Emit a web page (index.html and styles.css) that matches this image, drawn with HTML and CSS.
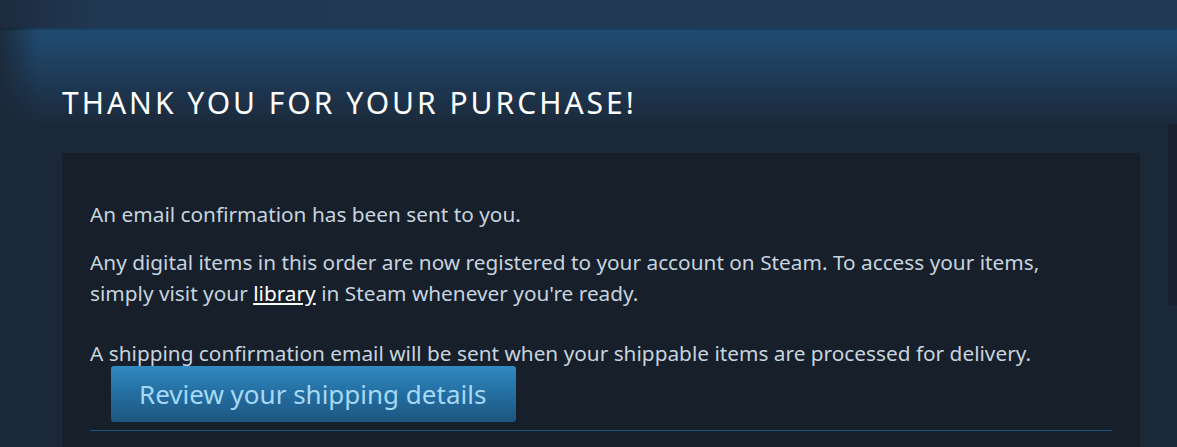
FILE: index.html
```html
<!DOCTYPE html>
<html>
<head>
<meta charset="utf-8">
<link rel="stylesheet" href="styles.css">
</head>
<body>
<div class="topbar"></div>
<div class="band">
  <div class="page">
    <div class="main">
      <h1 class="title">THANK YOU FOR YOUR PURCHASE!</h1>
      <div class="box">
        <p class="line first">An email confirmation has been sent to you.</p>
        <p class="line">Any digital items in this order are now registered to your account on Steam. To access your items, simply visit your <a class="lib" href="#">library</a> in Steam whenever you're ready.</p>
        <p class="line ship">A shipping confirmation email will be sent when your shippable items are processed for delivery.</p>
        <a class="btn" href="#">Review your shipping details</a>
        <div class="sep"></div>
      </div>
    </div>
    <div class="side"></div>
  </div>
</div>
</body>
</html>
```
FILE: styles.css
```css
html, body {
  margin: 0;
  padding: 0;
  height: 100%;
  background: #1b2838;
  overflow: hidden;
}
body {
  font-family: "Noto Sans", "Open Sans", sans-serif;
  color: #c6d4df;
}
.topbar {
  height: 28px;
  background: linear-gradient(90deg, #1c2b3e 0%, #213852 8%, #223a55 100%);
  box-shadow: 0 1px 2px rgba(0, 0, 0, 0.35);
  position: relative;
  z-index: 1;
}
.band {
  background:
    linear-gradient(90deg, rgba(27, 40, 56, 0.9) 0px, rgba(27, 40, 56, 0) 40px),
    linear-gradient(180deg, #1f4c72 0px, #1f4669 20px, #1e3a56 50px, #1b2838 100px);
  min-height: 419px;
}
.page {
  display: flex;
  padding-left: 62px;
}
.main {
  width: 1078px;
  flex: none;
}
.title {
  margin: 0;
  padding-top: 55px;
  height: 70px;
  font-weight: 400;
  font-size: 30px;
  line-height: 40px;
  letter-spacing: 3px;
  color: #ffffff;
  box-sizing: content-box;
}
.box {
  background: #171f2b;
  padding: 46px 28px 40px 28px;
  min-height: 300px;
}
.line {
  margin: 0 0 18px 0;
  max-width: 990px;
  font-size: 20.8px;
  line-height: 31px;
}
.first {
  margin-bottom: 17px;
}
.ship {
  margin-top: 29px;
  margin-bottom: 0;
}
.lib {
  color: #ffffff;
  text-decoration: underline;
}
.btn {
  display: inline-flex;
  align-items: center;
  margin-top: -3px;
  margin-left: 21px;
  height: 56px;
  width: 405px;
  box-sizing: border-box;
  padding-left: 28px;
  border-radius: 3px;
  background: linear-gradient(180deg, #318ac2 0%, #2470a3 45%, #1d5680 100%);
  color: #a6d9f7;
  font-size: 26px;
  text-decoration: none;
  vertical-align: top;
}
.sep {
  margin-top: 8px;
  height: 1px;
  background: #1f5277;
}
.side {
  margin-left: 28px;
  width: 20px;
  flex: none;
  height: 181px;
  background: #18212d;
  margin-top: 96px;
}
```
